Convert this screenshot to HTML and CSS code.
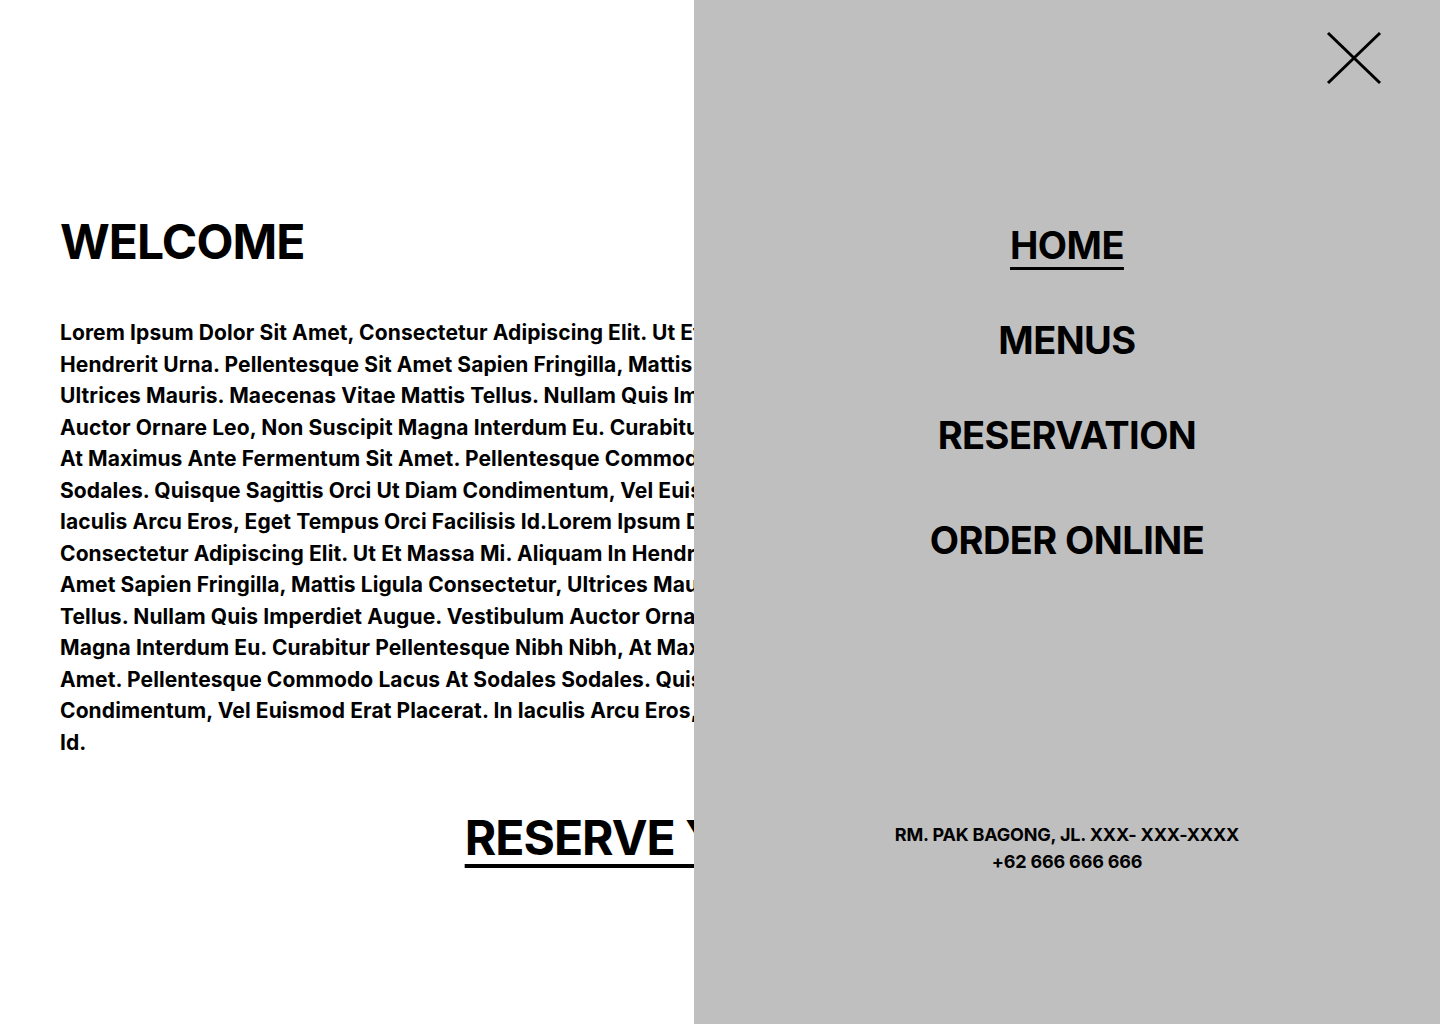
FILE: index.html
```html
<!DOCTYPE html>
<html lang="en">
<head>
<meta charset="utf-8">
<title>Welcome</title>
<link rel="stylesheet" href="styles.css">
</head>
<body>
<main class="main">
  <h1 class="title">WELCOME</h1>
  <p class="intro">Lorem Ipsum Dolor Sit Amet, Consectetur Adipiscing Elit. Ut Et Massa Mi. Aliquam In<br>
Hendrerit Urna. Pellentesque Sit Amet Sapien Fringilla, Mattis Ligula Consectetur,<br>
Ultrices Mauris. Maecenas Vitae Mattis Tellus. Nullam Quis Imperdiet Augue. Vestibulum<br>
Auctor Ornare Leo, Non Suscipit Magna Interdum Eu. Curabitur Pellentesque Nibh Nibh,<br>
At Maximus Ante Fermentum Sit Amet. Pellentesque Commodo Lacus At Sodales<br>
Sodales. Quisque Sagittis Orci Ut Diam Condimentum, Vel Euismod Erat Placerat. In<br>
Iaculis Arcu Eros, Eget Tempus Orci Facilisis Id.Lorem Ipsum Dolor Sit Amet,<br>
Consectetur Adipiscing Elit. Ut Et Massa Mi. Aliquam In Hendrerit Urna. Pellentesque Sit<br>
Amet Sapien Fringilla, Mattis Ligula Consectetur, Ultrices Mauris. Maecenas Vitae Mattis<br>
Tellus. Nullam Quis Imperdiet Augue. Vestibulum Auctor Ornare Leo, Non Suscipit<br>
Magna Interdum Eu. Curabitur Pellentesque Nibh Nibh, At Maximus Ante Fermentum Sit<br>
Amet. Pellentesque Commodo Lacus At Sodales Sodales. Quisque Sagittis Orci Ut Diam<br>
Condimentum, Vel Euismod Erat Placerat. In Iaculis Arcu Eros, Eget Tempus Orci Facilisis<br>
Id.</p>
  <div class="cta-row"><a class="cta" href="#">RESERVE YOUR TABLE</a></div>
</main>

<aside class="panel">
  <button class="close" type="button" aria-label="Close menu">
    <svg width="56" height="54" viewBox="0 0 56 54" fill="none" stroke="#000" stroke-width="3">
      <line x1="2" y1="2" x2="54" y2="52"/>
      <line x1="54" y1="2" x2="2" y2="52"/>
    </svg>
  </button>
  <nav class="nav">
    <a class="nav-link active" href="#">HOME</a>
    <a class="nav-link" href="#">MENUS</a>
    <a class="nav-link" href="#">RESERVATION</a>
    <a class="nav-link last" href="#">ORDER ONLINE</a>
  </nav>
  <div class="contact">
    <div>RM. PAK BAGONG, JL. XXX- XXX-XXXX</div>
    <div>+62 666 666 666</div>
  </div>
</aside>
</body>
</html>
```
FILE: styles.css
```css
* { box-sizing: border-box; }
html, body { margin: 0; padding: 0; }
body {
  width: 1440px;
  height: 1024px;
  overflow: hidden;
  background: #ffffff;
  color: #000000;
  font-family: Inter, "Noto Sans", sans-serif;
  font-weight: 700;
}
a { color: #000; }

.main {
  padding: 212px 60px 0 60px;
}
.title {
  margin: 0;
  font-size: 48px;
  line-height: 60px;
  font-weight: 700;
  letter-spacing: -0.02em;
}
.intro {
  margin: 45px 0 0 0;
  width: 1000px;
  font-size: 21px;
  line-height: 31.5px;
  letter-spacing: 0.005em;
}
.cta-row {
  margin-top: 52px;
  text-align: center;
  margin-left: -60px;
  margin-right: -60px;
}
.cta {
  font-size: 48px;
  line-height: 55px;
  letter-spacing: -0.02em;
  text-decoration: underline;
  text-decoration-thickness: 4px;
  text-underline-offset: 9px;
}

.panel {
  position: fixed;
  top: 0;
  right: 0;
  width: 746px;
  height: 1024px;
  background: #bfbfbf;
  display: flex;
  flex-direction: column;
  align-items: center;
  padding: 31px 58px 0 0;
}
.close {
  align-self: flex-end;
  background: none;
  border: 0;
  padding: 0;
  width: 56px;
  height: 54px;
  cursor: pointer;
}
.close svg { display: block; }
.nav {
  margin-top: 137px;
  display: flex;
  flex-direction: column;
  align-items: center;
  gap: 49px;
  padding-left: 58px;
}
.nav-link {
  font-size: 38px;
  line-height: 46px;
  letter-spacing: -0.015em;
  text-decoration: none;
}
.nav-link.active {
  text-decoration: underline;
  text-decoration-thickness: 3px;
  text-underline-offset: 8px;
}
.nav-link.last { margin-top: 10px; }
.contact {
  margin-top: 258px;
  padding-left: 58px;
  text-align: center;
  font-size: 18px;
  line-height: 27px;
  letter-spacing: -0.01em;
}
```
